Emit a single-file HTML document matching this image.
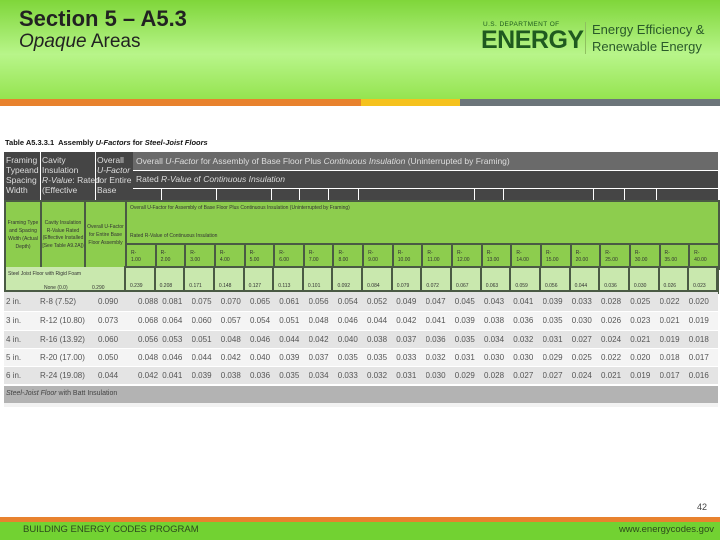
<!DOCTYPE html>
<html><head><meta charset="utf-8"><style>
*{margin:0;padding:0;box-sizing:border-box}
body{width:720px;height:540px;position:relative;overflow:hidden;background:#fff;font-family:"Liberation Sans",sans-serif}
.abs{position:absolute}
table{border-collapse:collapse;table-layout:fixed}
td{overflow:hidden;white-space:nowrap}
.g td{border:2px solid #4a5a44}
.r td.v{padding-left:4px;line-height:7px}
</style></head><body>
<div class="abs" style="left:0;top:0;width:720px;height:99px;background:linear-gradient(#7fd63a 0%,#b8f58a 55%,#95e450 100%)"></div>
<div class="abs" style="left:19px;top:6px;font-size:22px;font-weight:bold;color:#222">Section 5 – A5.3</div>
<div class="abs" style="left:19px;top:31px;font-size:19px;color:#222"><i>Opaque</i> Areas</div>
<div class="abs" style="left:483px;top:21px;font-size:6.5px;color:#1f5a1f;letter-spacing:.4px">U.S. DEPARTMENT OF</div>
<div class="abs" style="left:481px;top:26px;font-size:25px;font-weight:bold;color:#1f5a1f;letter-spacing:-.5px">ENERGY</div>
<div class="abs" style="left:585px;top:22px;width:1px;height:32px;background:#8fc060"></div>
<div class="abs" style="left:592px;top:21px;font-size:13px;color:#2a5a2a;line-height:17px">Energy Efficiency &amp;<br>Renewable Energy</div>
<div class="abs" style="left:0;top:99px;width:361px;height:7px;background:#e8822e"></div>
<div class="abs" style="left:361px;top:99px;width:99px;height:7px;background:#f5c21e"></div>
<div class="abs" style="left:460px;top:99px;width:260px;height:7px;background:#6c757a"></div>

<div class="abs" style="left:5px;top:138px;font-size:7.5px;font-weight:bold;color:#111">Table A5.3.3.1&nbsp; Assembly <i>U-Factors</i> for <i>Steel-Joist Floors</i></div>

<!-- dark header -->
<div class="abs" style="left:4px;top:152px;width:714px;height:48px;background:#454545"></div>
<div class="abs" style="left:40px;top:152px;width:1px;height:48px;background:#fff"></div>
<div class="abs" style="left:95px;top:152px;width:1px;height:48px;background:#fff"></div>
<div class="abs" style="left:133px;top:152px;width:585px;height:18px;background:#6a6a6a"></div>
<div class="abs" style="left:133px;top:170px;width:585px;height:1px;background:#fff"></div>
<div class="abs" style="left:133px;top:188px;width:585px;height:1px;background:#fff"></div>
<div class="abs" style="left:6px;top:155px;font-size:8.5px;line-height:10px;color:#ddd">Framing<br>Typeand<br>Spacing<br>Width</div>
<div class="abs" style="left:42px;top:155px;font-size:8.5px;line-height:10px;color:#ddd">Cavity<br>Insulation<br><i>R-Value</i>: Rated<br>(Effective</div>
<div class="abs" style="left:97px;top:155px;font-size:8.5px;line-height:10px;color:#ddd">Overall<br><i>U-Factor</i><br>for Entire<br>Base</div>
<div class="abs" style="left:136px;top:156px;font-size:8.5px;color:#ddd">Overall <i>U-Factor</i> for Assembly of Base Floor Plus <i>Continuous Insulation</i> (Uninterrupted by Framing)</div>
<div class="abs" style="left:136px;top:174px;font-size:8.5px;color:#ddd">Rated <i>R-Value</i> of <i>Continuous Insulation</i></div>
<div class="abs" style="left:161px;top:189px;width:1px;height:11px;background:#fff"></div>
<div class="abs" style="left:216px;top:189px;width:1px;height:11px;background:#fff"></div>
<div class="abs" style="left:271px;top:189px;width:1px;height:11px;background:#fff"></div>
<div class="abs" style="left:299px;top:189px;width:1px;height:11px;background:#fff"></div>
<div class="abs" style="left:328px;top:189px;width:1px;height:11px;background:#fff"></div>
<div class="abs" style="left:358px;top:189px;width:1px;height:11px;background:#fff"></div>
<div class="abs" style="left:474px;top:189px;width:1px;height:11px;background:#fff"></div>
<div class="abs" style="left:503px;top:189px;width:1px;height:11px;background:#fff"></div>
<div class="abs" style="left:593px;top:189px;width:1px;height:11px;background:#fff"></div>
<div class="abs" style="left:624px;top:189px;width:1px;height:11px;background:#fff"></div>
<div class="abs" style="left:656px;top:189px;width:1px;height:11px;background:#fff"></div>

<!-- green header -->
<table class="abs g r" style="left:4px;top:200px;width:714px;height:68px;font-size:5px;color:#333;background:#8dcd4e">
<colgroup><col style="width:36px"><col style="width:44px"><col style="width:41px"><col span="20" style="width:29.65px"></colgroup>
<tr style="height:43px"><td rowspan="2" style="text-align:center;white-space:normal;line-height:8px">Framing Type and Spacing Width (Actual Depth)</td>
<td rowspan="2" style="text-align:center;white-space:normal;line-height:7.5px">Cavity Insulation R-Value Rated (Effective Installed [See Table A9.2A])</td>
<td rowspan="2" style="text-align:center;white-space:normal;line-height:8px">Overall U-Factor for Entire Base Floor Assembly</td>
<td colspan="20"><div style="position:relative;height:39px"><span style="position:absolute;left:3px;top:2px">Overall U-Factor for Assembly of Base Floor Plus Continuous Insulation (Uninterrupted by Framing)</span><span style="position:absolute;left:3px;top:30px">Rated R-Value of Continuous Insulation</span></div></td></tr>
<tr style="height:25px">
<td class="v">R-<br>1.00</td><td class="v">R-<br>2.00</td><td class="v">R-<br>3.00</td><td class="v">R-<br>4.00</td><td class="v">R-<br>5.00</td><td class="v">R-<br>6.00</td><td class="v">R-<br>7.00</td><td class="v">R-<br>8.00</td><td class="v">R-<br>9.00</td><td class="v">R-<br>10.00</td><td class="v">R-<br>11.00</td><td class="v">R-<br>12.00</td><td class="v">R-<br>13.00</td><td class="v">R-<br>14.00</td><td class="v">R-<br>15.00</td><td class="v">R-<br>20.00</td><td class="v">R-<br>25.00</td><td class="v">R-<br>30.00</td><td class="v">R-<br>35.00</td><td class="v">R-<br>40.00</td></tr>
</table>

<!-- light green row -->
<div class="abs" style="left:4px;top:267px;width:714px;height:25px;background:#c9e8ae;border:2px solid #4a5a44;border-top:none"></div>
<div class="abs" style="left:8px;top:271px;font-size:5px;color:#333">Steel Joist Floor with Rigid Foam</div>
<div class="abs" style="left:44px;top:285px;font-size:5px;color:#333">None (0.0)</div>
<div class="abs" style="left:92px;top:285px;font-size:5px;color:#333">0.290</div>
<table class="abs g" style="left:4px;top:266px;width:714px;height:26px;font-size:5px;color:#333">
<colgroup><col style="width:121px"><col span="20" style="width:29.65px"></colgroup>
<tr style="height:26px"><td style="border:none"></td>
<td style="vertical-align:bottom;padding:0 0 3px 4px">0.239</td><td style="vertical-align:bottom;padding:0 0 3px 4px">0.208</td><td style="vertical-align:bottom;padding:0 0 3px 4px">0.171</td><td style="vertical-align:bottom;padding:0 0 3px 4px">0.148</td><td style="vertical-align:bottom;padding:0 0 3px 4px">0.127</td><td style="vertical-align:bottom;padding:0 0 3px 4px">0.113</td><td style="vertical-align:bottom;padding:0 0 3px 4px">0.101</td><td style="vertical-align:bottom;padding:0 0 3px 4px">0.092</td><td style="vertical-align:bottom;padding:0 0 3px 4px">0.084</td><td style="vertical-align:bottom;padding:0 0 3px 4px">0.079</td><td style="vertical-align:bottom;padding:0 0 3px 4px">0.072</td><td style="vertical-align:bottom;padding:0 0 3px 4px">0.067</td><td style="vertical-align:bottom;padding:0 0 3px 4px">0.063</td><td style="vertical-align:bottom;padding:0 0 3px 4px">0.059</td><td style="vertical-align:bottom;padding:0 0 3px 4px">0.056</td><td style="vertical-align:bottom;padding:0 0 3px 4px">0.044</td><td style="vertical-align:bottom;padding:0 0 3px 4px">0.036</td><td style="vertical-align:bottom;padding:0 0 3px 4px">0.030</td><td style="vertical-align:bottom;padding:0 0 3px 4px">0.026</td><td style="vertical-align:bottom;padding:0 0 3px 4px">0.023</td></tr>
</table>

<!-- data rows -->
<table class="abs" style="left:4px;top:292px;width:714px;font-size:8px;color:#555">
<colgroup><col style="width:36px"><col style="width:56px"><col style="width:37px"><col span="20" style="width:29.25px"></colgroup>
<tr style="height:19px;background:#e4e4e4;border-bottom:1px solid #fff"><td style="padding-left:2px">2 in.</td><td>R-8 (7.52)</td><td style="padding-left:2px">0.090</td><td style="padding-left:5px">0.088</td><td>0.081</td><td>0.075</td><td>0.070</td><td>0.065</td><td>0.061</td><td>0.056</td><td>0.054</td><td>0.052</td><td>0.049</td><td>0.047</td><td>0.045</td><td>0.043</td><td>0.041</td><td>0.039</td><td>0.033</td><td>0.028</td><td>0.025</td><td>0.022</td><td>0.020</td></tr>
<tr style="height:19px;background:#f4f4f4;border-bottom:1px solid #fff"><td style="padding-left:2px">3 in.</td><td>R-12 (10.80)</td><td style="padding-left:2px">0.073</td><td style="padding-left:5px">0.068</td><td>0.064</td><td>0.060</td><td>0.057</td><td>0.054</td><td>0.051</td><td>0.048</td><td>0.046</td><td>0.044</td><td>0.042</td><td>0.041</td><td>0.039</td><td>0.038</td><td>0.036</td><td>0.035</td><td>0.030</td><td>0.026</td><td>0.023</td><td>0.021</td><td>0.019</td></tr>
<tr style="height:18px;background:#e4e4e4;border-bottom:1px solid #fff"><td style="padding-left:2px">4 in.</td><td>R-16 (13.92)</td><td style="padding-left:2px">0.060</td><td style="padding-left:5px">0.056</td><td>0.053</td><td>0.051</td><td>0.048</td><td>0.046</td><td>0.044</td><td>0.042</td><td>0.040</td><td>0.038</td><td>0.037</td><td>0.036</td><td>0.035</td><td>0.034</td><td>0.032</td><td>0.031</td><td>0.027</td><td>0.024</td><td>0.021</td><td>0.019</td><td>0.018</td></tr>
<tr style="height:18px;background:#f4f4f4;border-bottom:1px solid #fff"><td style="padding-left:2px">5 in.</td><td>R-20 (17.00)</td><td style="padding-left:2px">0.050</td><td style="padding-left:5px">0.048</td><td>0.046</td><td>0.044</td><td>0.042</td><td>0.040</td><td>0.039</td><td>0.037</td><td>0.035</td><td>0.035</td><td>0.033</td><td>0.032</td><td>0.031</td><td>0.030</td><td>0.030</td><td>0.029</td><td>0.025</td><td>0.022</td><td>0.020</td><td>0.018</td><td>0.017</td></tr>
<tr style="height:19px;background:#e4e4e4;border-bottom:2px solid #fff"><td style="padding-left:2px">6 in.</td><td>R-24 (19.08)</td><td style="padding-left:2px">0.044</td><td style="padding-left:5px">0.042</td><td>0.041</td><td>0.039</td><td>0.038</td><td>0.036</td><td>0.035</td><td>0.034</td><td>0.033</td><td>0.032</td><td>0.031</td><td>0.030</td><td>0.029</td><td>0.028</td><td>0.027</td><td>0.027</td><td>0.024</td><td>0.021</td><td>0.019</td><td>0.017</td><td>0.016</td></tr>
</table>
<div class="abs" style="left:4px;top:386px;width:714px;height:17px;background:#b3b3b3"></div>
<div class="abs" style="left:6px;top:390px;font-size:7px;color:#444"><i>Steel-Joist Floor</i> with Batt Insulation</div>
<div class="abs" style="left:4px;top:403px;width:714px;height:4px;background:#f2f2f2"></div>

<div class="abs" style="left:697px;top:502px;font-size:9px;color:#444">42</div>
<div class="abs" style="left:0;top:517px;width:720px;height:5px;background:#e8822e"></div>
<div class="abs" style="left:0;top:522px;width:720px;height:18px;background:#72d232"></div>
<div class="abs" style="left:23px;top:524px;font-size:9.5px;color:#2c4a1c">BUILDING ENERGY CODES PROGRAM</div>
<div class="abs" style="right:6px;top:524px;font-size:9.5px;color:#2c4a1c">www.energycodes.gov</div>
</body></html>
